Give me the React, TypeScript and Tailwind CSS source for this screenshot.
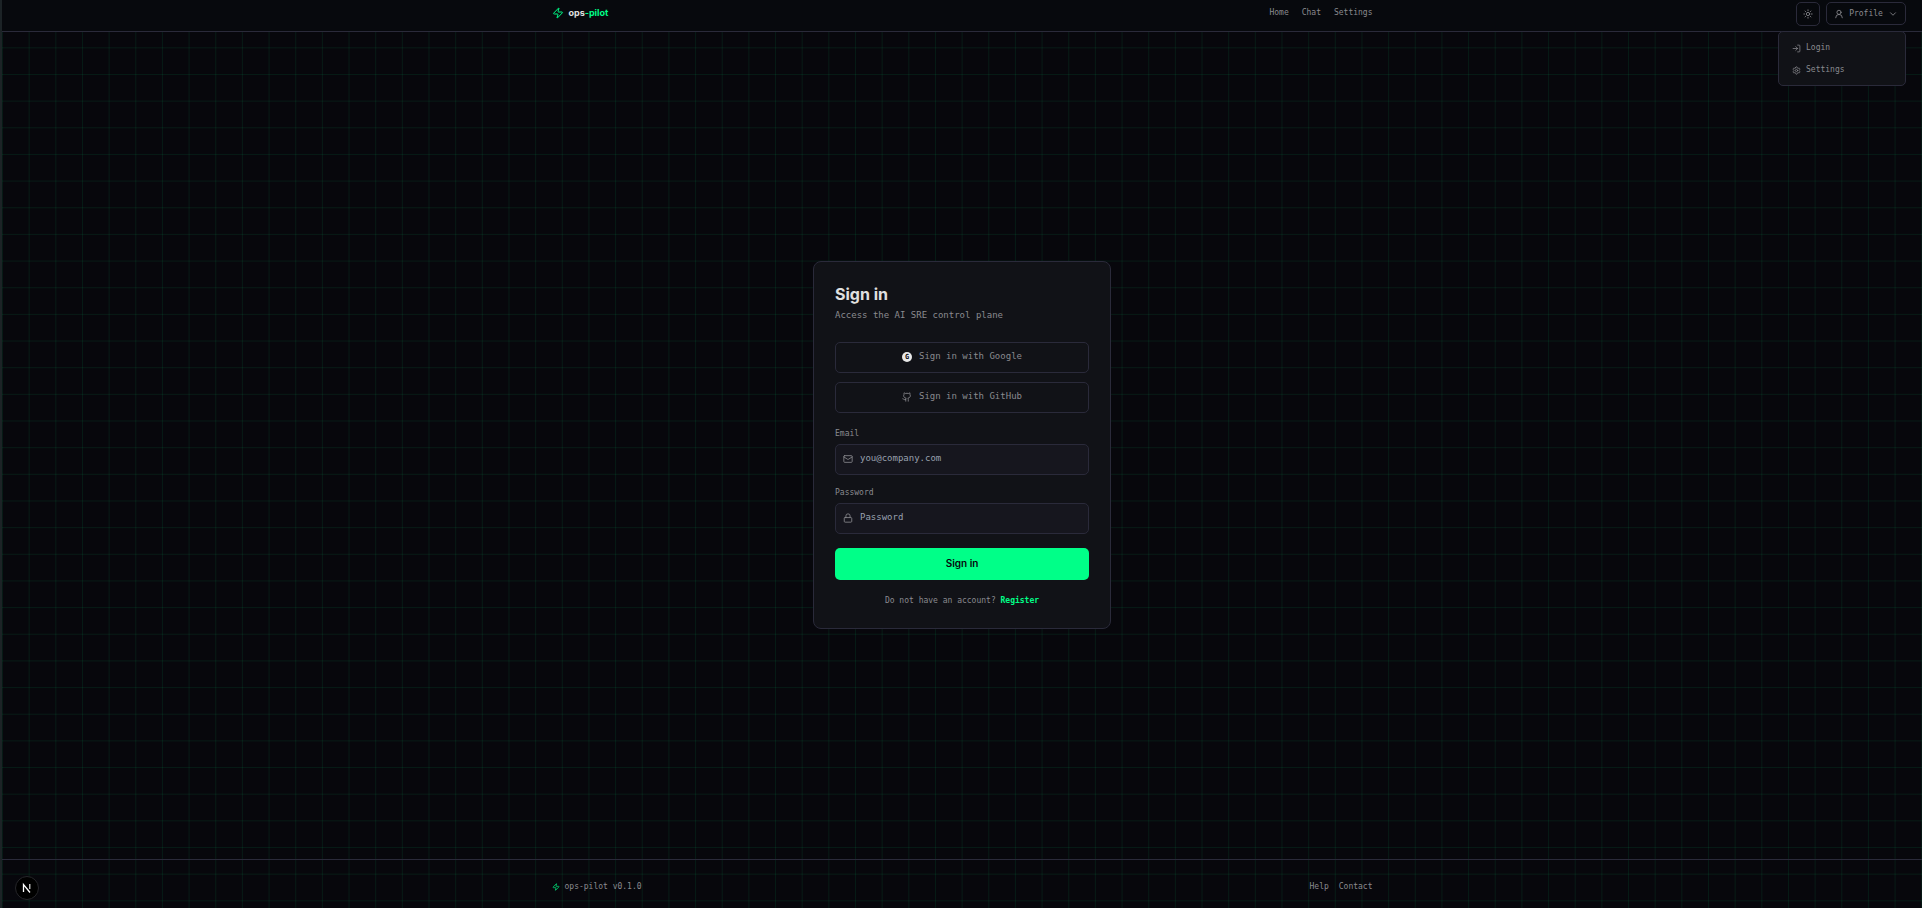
import type { ReactNode } from "react";
import { ChevronDown, Github, Lock, LogIn, Mail, Settings, Sun, UserRound, Zap } from "lucide-react";

function NavLink({ children }: { children: ReactNode }) {
  return (
    <a href="#" className="text-[8px] leading-3 text-[#8a8a8f]">
      {children}
    </a>
  );
}

function OAuthButton({ icon, children }: { icon: ReactNode; children: ReactNode }) {
  return (
    <button
      type="button"
      className="flex h-[31px] w-full items-center justify-center gap-[7px] rounded-[5px] border border-[#2a2a3a] text-[9px] text-[#8a8a8f]"
    >
      {icon}
      {children}
    </button>
  );
}

type FieldProps = { id: string; label: string; type: string; placeholder: string; icon: ReactNode };

function Field({ id, label, type, placeholder, icon }: FieldProps) {
  return (
    <div className="flex flex-col gap-1">
      <label htmlFor={id} className="text-[8px] leading-3 text-[#8a8a8f]">
        {label}
      </label>
      <div className="flex h-[31px] items-center gap-[7px] rounded-[5px] border border-[#2a2a3a] bg-[#16161e] px-[7px] text-[#8a8a8f]">
        {icon}
        <input
          id={id}
          type={type}
          placeholder={placeholder}
          className="min-w-0 flex-1 bg-transparent text-[9px] text-[#e8e8e8] outline-none placeholder:text-[#99a1af]"
        />
      </div>
    </div>
  );
}

export default function App() {
  return (
    <div className="relative flex min-h-screen flex-col border-l-2 border-[#1c2326] bg-[#07070c] bg-[linear-gradient(to_right,rgba(0,255,136,0.08)_1px,transparent_1px),linear-gradient(to_bottom,rgba(0,255,136,0.08)_1px,transparent_1px)] bg-[size:calc(80px/3)_calc(80px/3)] bg-[position:0_-6px] font-['DejaVu_Sans_Mono',monospace]">
      <header className="relative h-8 border-b border-[#2a2a3a] bg-[#07090d]">
        <div className="mx-auto flex h-[26px] max-w-[853px] items-center justify-between px-4">
          <a href="#" className="flex items-center gap-[5px] font-['Inter',sans-serif] text-[9px] leading-3 font-bold text-[#e0e0e0]">
            <Zap className="size-3 text-[#00ff88]" />
            <span>
              ops<span className="text-[#00ff88]">-pilot</span>
            </span>
          </a>
          <nav className="flex gap-[13px]">
            <NavLink>Home</NavLink>
            <NavLink>Chat</NavLink>
            <NavLink>Settings</NavLink>
          </nav>
        </div>
        <div className="absolute top-0.5 right-4 flex items-start gap-1.5 text-[#8a8a8f]">
          <button type="button" aria-label="Toggle theme" className="flex size-6 items-center justify-center rounded-[5px] border border-[#2a2a3a]">
            <Sun className="size-2.5" />
          </button>
          <button type="button" className="flex h-[23px] w-20 items-center justify-center gap-[5px] rounded-[5px] border border-[#2a2a3a] text-[8px]">
            <UserRound className="size-2.5" />
            Profile
            <ChevronDown className="size-2.5" />
          </button>
        </div>
        <div className="absolute top-[31px] right-4 z-10 flex w-32 flex-col rounded-[5px] border border-[#2a2a3a] bg-[#111217] px-[13px] pt-[5px] pb-1 text-[8px] text-[#8a8a8f]">
          <a href="#" className="flex h-[22px] items-center gap-[5px]">
            <LogIn className="size-[9px]" />
            Login
          </a>
          <a href="#" className="flex h-[22px] items-center gap-[5px]">
            <Settings className="size-[9px]" />
            Settings
          </a>
        </div>
      </header>

      <main className="flex flex-1 items-center justify-center pb-0.5">
        <section className="w-[298px] rounded-lg border border-[#2a2a3a] bg-[#111217] px-[21px] pt-6 pb-[21px]">
          <h1 className="font-['Inter',sans-serif] text-base leading-4 font-bold text-[#e0e0e0]">Sign in</h1>
          <p className="mt-1.5 text-[9px] leading-[14px] text-[#8a8a8f]">Access the AI SRE control plane</p>
          <div className="mt-5 flex flex-col gap-[9px]">
            <OAuthButton
              icon={
                <span className="flex size-2.5 items-center justify-center rounded-full bg-[#e8e8e8] text-[7px] font-bold text-[#06060b]">
                  G
                </span>
              }
            >
              Sign in with Google
            </OAuthButton>
            <OAuthButton icon={<Github className="size-2.5" />}>Sign in with GitHub</OAuthButton>
          </div>
          <form className="mt-[15px] flex flex-col gap-3">
            <Field id="email" label="Email" type="email" placeholder="you@company.com" icon={<Mail className="size-2.5" />} />
            <Field id="password" label="Password" type="password" placeholder="Password" icon={<Lock className="size-2.5" />} />
            <button type="submit" className="mt-0.5 h-8 rounded-[5px] bg-[#00ff88] font-['Inter',sans-serif] text-[10px] font-semibold text-[#06060b]">
              Sign in
            </button>
          </form>
          <p className="mt-[15px] text-center text-[8px] leading-3 text-[#8a8a8f]">
            Do not have an account?{" "}
            <a href="#" className="font-bold text-[#00ff88]">
              Register
            </a>
          </p>
        </section>
      </main>

      <footer className="border-t border-[#2a2a3a] pt-[21px] pb-[15px]">
        <div className="mx-auto flex max-w-[853px] items-center justify-between px-4 text-[8px] leading-3 text-[#8a8a8f]">
          <span className="flex items-center gap-[5px]">
            <Zap className="size-2 text-[#00ff88]" />
            ops-pilot v0.1.0
          </span>
          <nav className="flex h-3 gap-2.5">
            <NavLink>Help</NavLink>
            <NavLink>Contact</NavLink>
          </nav>
        </div>
      </footer>

      <button
        type="button"
        aria-label="Open developer tools"
        className="fixed bottom-2 left-[15px] flex size-6 items-center justify-center rounded-full border border-[#26262a] bg-black"
      >
        <svg viewBox="0 0 12 12" className="size-3" fill="none" stroke="white">
          <path d="M2.5 10V2.5L9 10.5" strokeWidth="1.3" />
          <path d="M8.8 2v5" strokeWidth="1.1" />
        </svg>
      </button>
    </div>
  );
}
